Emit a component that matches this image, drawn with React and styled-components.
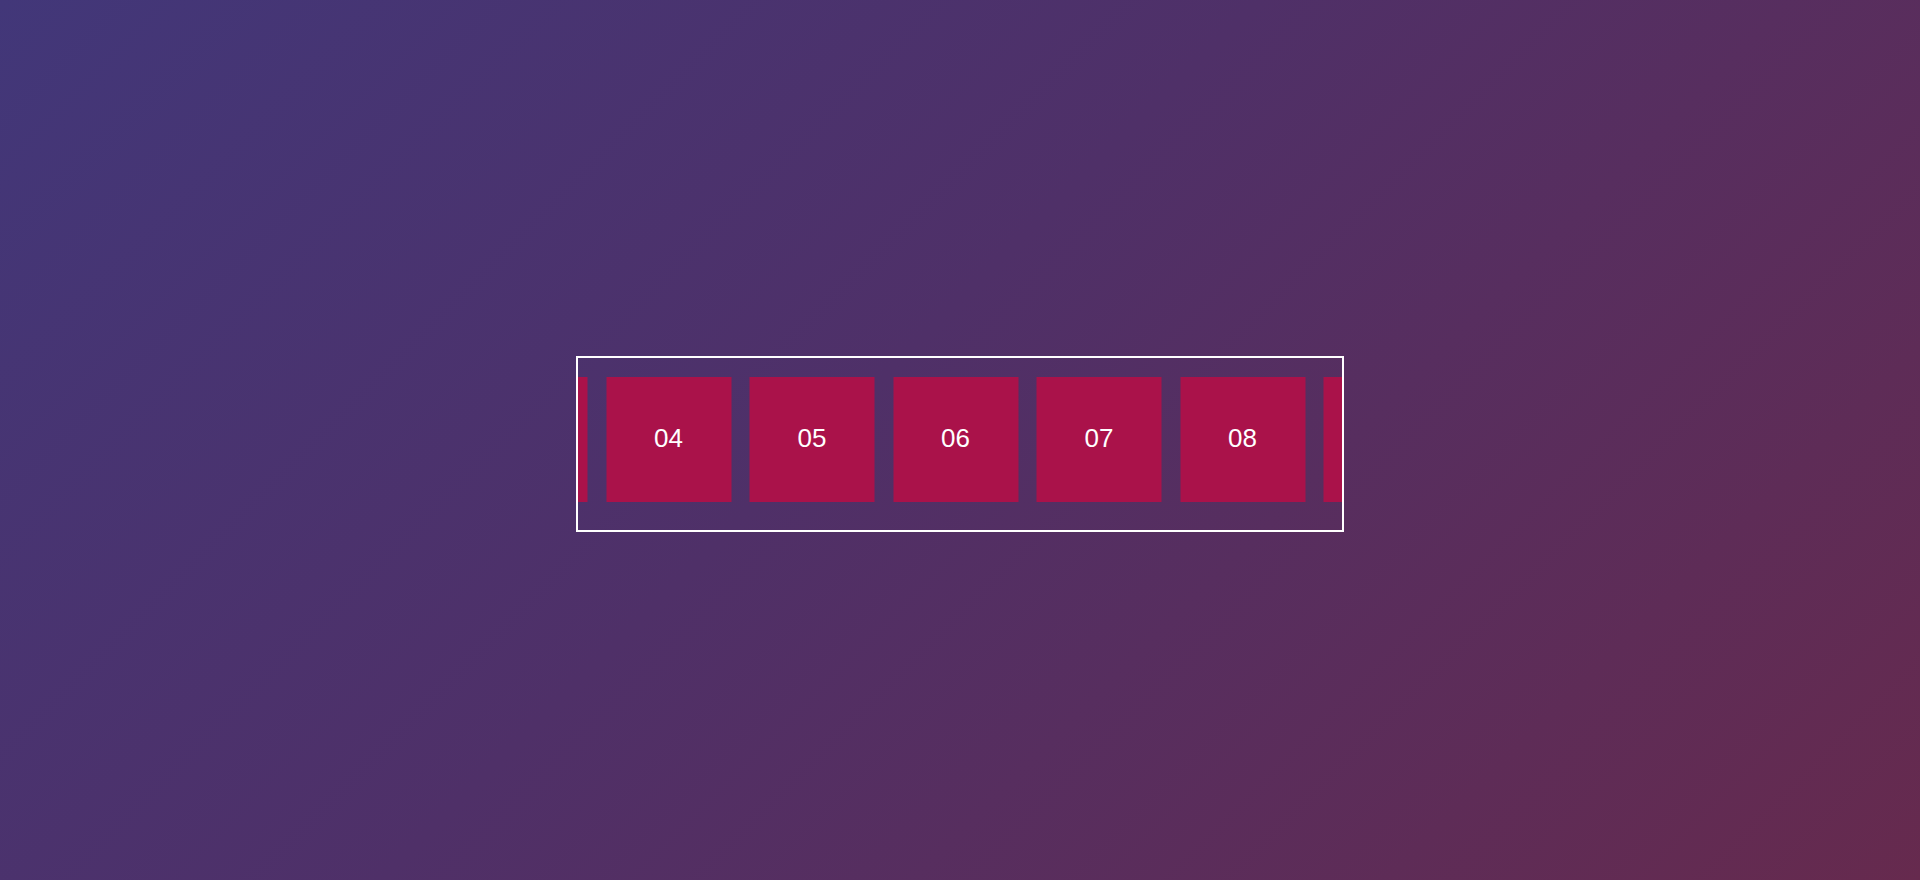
import React from "react";
import styled, { createGlobalStyle } from "styled-components";

const GlobalStyle = createGlobalStyle`
  html, body {
    margin: 0;
    padding: 0;
  }
  body {
    font-family: "Liberation Sans", Arial, sans-serif;
  }
`;

const Page = styled.div`
  width: 100%;
  height: 880px;
  display: flex;
  align-items: center;
  justify-content: center;
  background: linear-gradient(135deg, #423779 0%, #4f3068 45%, #662a4e 100%);
`;

const Frame = styled.div`
  width: 764px;
  margin-top: 8px;
  border: 2px solid #ffffff;
  overflow: hidden;
  padding: 19px 0 28px;
`;

const Track = styled.div`
  display: flex;
  gap: 18.5px;
  transform: translateX(${(p) => p.$offset}px);
`;

const Tile = styled.div`
  flex: 0 0 125px;
  height: 125px;
  box-sizing: border-box;
  padding-bottom: 2px;
  background: #aa124a;
  color: #ffffff;
  font-size: 26px;
  display: flex;
  align-items: center;
  justify-content: center;
`;

const items = ["01", "02", "03", "04", "05", "06", "07", "08", "09", "10"];

export default function App() {
  return (
    <>
      <GlobalStyle />
      <Page>
        <Frame>
          <Track $offset={-402.5}>
            {items.map((n) => (
              <Tile key={n}>{n}</Tile>
            ))}
          </Track>
        </Frame>
      </Page>
    </>
  );
}
